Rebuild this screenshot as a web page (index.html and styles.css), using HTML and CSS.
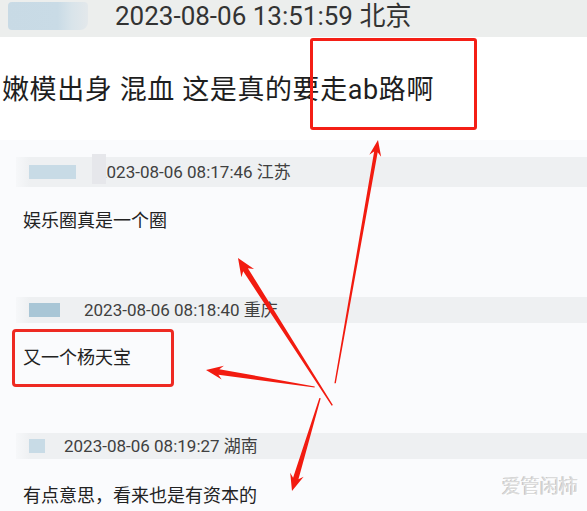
FILE: index.html
```html
<!DOCTYPE html>
<html lang="zh-CN">
<head>
    <meta charset="UTF-8">
    <meta name="viewport" content="width=device-width, initial-scale=1.0">
    <title>评论截图</title>
    <link rel="stylesheet" href="styles.css">
</head>
<body>
    <div class="page">
        <!-- 原帖 -->
        <section class="post">
            <div class="top-bar">
                <span class="avatar avatar-top"></span>
                <span class="stamp stamp-top">2023-08-06 13:51:59 北京</span>
            </div>
            <div class="post-text">嫩模出身 混血 这是真的要走ab路啊</div>
            <div class="mark-box mark-post"></div>
        </section>

        <!-- 评论 -->
        <section class="comment comment-1">
            <div class="meta">
                <span class="avatar avatar-1"></span>
                <span class="stamp stamp-1">2023-08-06 08:17:46 江苏</span>
            </div>
            <div class="text">娱乐圈真是一个圈</div>
        </section>

        <section class="comment comment-2">
            <div class="meta">
                <span class="avatar avatar-2"></span>
                <span class="stamp stamp-2">2023-08-06 08:18:40 重庆</span>
            </div>
            <div class="text boxed">又一个杨天宝</div>
        </section>

        <section class="comment comment-3">
            <div class="meta">
                <span class="avatar avatar-3"></span>
                <span class="stamp stamp-3">2023-08-06 08:19:27 湖南</span>
            </div>
            <div class="text">有点意思，看来也是有资本的</div>
        </section>

        <!-- 红色箭头标注 -->
        <svg class="arrows" width="587" height="511" viewBox="0 0 587 511">
            <g fill="#f21b10">
                <g transform="translate(378 140) rotate(-80)">
                    <polygon points="0,0 -16,-6 -12,-1.8 -247,-0.7 -247,0.7 -12,1.8 -16,6"/>
                </g>
                <g transform="translate(238 258) rotate(-122.6)">
                    <polygon points="0,0 -18,-7.5 -14,-2.8 -175,-0.7 -175,0.7 -14,2.8 -18,7.5"/>
                </g>
                <g transform="translate(206 370) rotate(-171.1)">
                    <polygon points="0,0 -17,-7 -13,-2.8 -110,-0.6 -110,0.6 -13,2.8 -17,7"/>
                </g>
                <g transform="translate(292 491) rotate(106.8)">
                    <polygon points="0,0 -17,-7 -13,-2.8 -97,-0.7 -97,0.7 -13,2.8 -17,7"/>
                </g>
            </g>
        </svg>

        <div class="watermark">爱管闲柿</div>
    </div>
</body>
</html>
```

FILE: styles.css
```css
body, html {
    margin: 0;
    padding: 0;
    font-family: Roboto, "Noto Sans CJK SC", sans-serif;
    color: #222;
}

.page {
    position: relative;
    width: 587px;
    height: 511px;
    overflow: hidden;
    background-color: #fafbfd;
}

/* 原帖 */
.post {
    background-color: #fff;
    height: 140px;
}
.top-bar {
    height: 37px;
    background-color: #eceeed;
    display: flex;
    align-items: flex-start;
    padding-left: 8px;
}
.avatar {
    display: block;
    flex-shrink: 0;
}
.avatar-top {
    width: 80px;
    height: 28px;
    margin-top: 2px;
    border-radius: 4px 4px 8px 4px;
    background: linear-gradient(90deg, #c8dae5 0, #c9dbe6 62%, #d9e4ea 80%, #e3e8eb 100%);
}
.stamp-top {
    margin-left: 27px;
    margin-top: 1px;
    font-size: 26px;
    line-height: 30px;
    color: #333;
}
.post-text {
    padding: 35px 0 0 2px;
    font-size: 27px;
    line-height: 36px;
    letter-spacing: 0.6px;
    color: #1e1e1e;
}
.mark-box {
    position: absolute;
    border: 3px solid #f41f16;
    border-radius: 3px;
    box-sizing: border-box;
}
.mark-post {
    left: 310px;
    top: 38px;
    width: 167px;
    height: 92px;
}

/* 评论 */
.comment .meta {
    display: flex;
    align-items: center;
    margin-left: 16px;
    background: linear-gradient(90deg, rgba(238,240,242,0.3) 0, #eef0f2 14px);
}
.comment .stamp {
    position: relative;
    font-size: 17px;
    line-height: 22px;
    color: #404040;
}
.comment .text {
    font-size: 18px;
    line-height: 24px;
    padding-left: 23px;
    color: #222;
}

.comment-1 .meta {
    margin-top: 17px;
    height: 30px;
}
.avatar-1 {
    width: 47px;
    height: 14px;
    margin-left: 13px;
    margin-right: 21px;
    background-color: #c8dbe6;
}
.stamp-1::before {
    content: "";
    position: absolute;
    left: -5px;
    top: -7px;
    width: 14px;
    height: 30px;
    background-color: #e6e7eb;
}
.comment-1 .text {
    margin-top: 22px;
}

.comment-2 .meta {
    margin-top: 64px;
    height: 26px;
}
.avatar-2 {
    width: 31px;
    height: 14px;
    margin-left: 13px;
    margin-right: 24px;
    background-color: #a9c6d6;
}
.comment .boxed {
    margin: 6px 0 0 12px;
    width: 162px;
    height: 58px;
    box-sizing: border-box;
    border: 3px solid #ee2a22;
    border-radius: 4px;
    padding-left: 8px;
    display: flex;
    align-items: center;
}

.comment-3 .meta {
    margin-top: 46px;
    height: 26px;
}
.avatar-3 {
    width: 16px;
    height: 14px;
    margin-left: 13px;
    margin-right: 19px;
    background-color: #c8dbe6;
}
.comment-3 .text {
    margin-top: 25px;
}

.arrows {
    position: absolute;
    left: 0;
    top: 0;
    pointer-events: none;
}

.watermark {
    position: absolute;
    right: 9px;
    bottom: 13px;
    font-size: 19px;
    line-height: 22px;
    color: #dadada;
    text-shadow: 1px 1px 0 #fff, -1px 0 0 #c4c4c4;
}
```
